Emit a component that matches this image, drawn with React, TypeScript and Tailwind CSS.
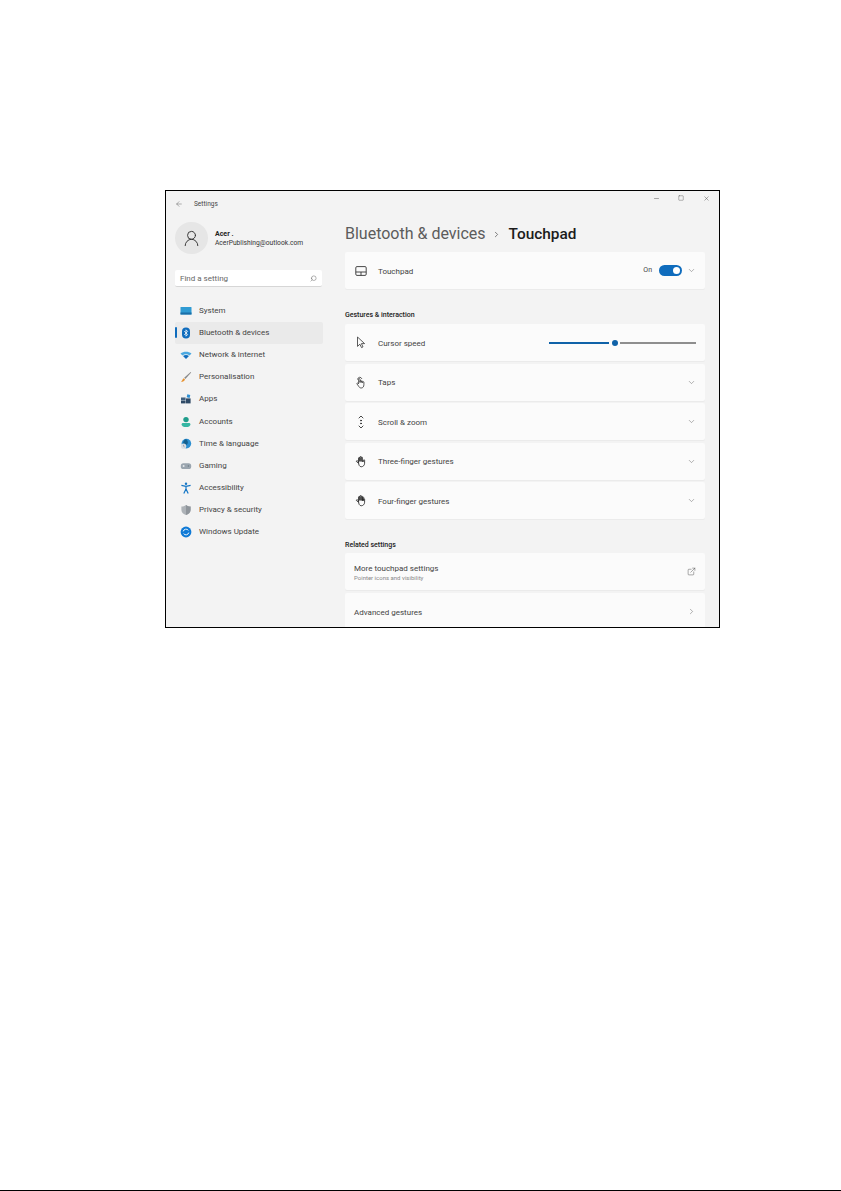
import type { ReactNode } from 'react'
import { ArrowLeft, ChevronDown, ChevronRight, ExternalLink, Minus, Search, Square, UserRound, X } from 'lucide-react'

function SystemIcon() {
  return (
    <svg width="12" height="12" viewBox="0 0 12 12">
      <rect x="0.5" y="2" width="11" height="7.5" rx="0.6" fill="#2f9bd3" />
      <rect x="0.5" y="7.5" width="11" height="2" fill="#1b6fa8" />
    </svg>
  )
}

function BluetoothIcon() {
  return (
    <svg width="12" height="12" viewBox="0 0 12 12">
      <rect x="2" y="0.5" width="8" height="11" rx="4" fill="#0f6cbd" />
      <path d="M4.3 4 7.6 7.6 6 9.2V2.8L7.6 4.4 4.3 8" fill="none" stroke="#fff" strokeWidth="0.8" />
    </svg>
  )
}

function WifiIcon() {
  return (
    <svg width="12" height="12" viewBox="0 0 12 12">
      <path d="M0.5 4.6C3.6 2 8.4 2 11.5 4.6L9.6 6.5C7.6 4.9 4.4 4.9 2.4 6.5Z" fill="#4aa8e0" />
      <path d="M3 7C4.8 5.6 7.2 5.6 9 7L6 10Z" fill="#0f6cbd" />
    </svg>
  )
}

function BrushIcon() {
  return (
    <svg width="12" height="12" viewBox="0 0 12 12">
      <path d="M10.6 1 11.2 1.6 5.4 8 4.2 6.8Z" fill="#8a8a8a" />
      <path d="M3.8 7.2 5 8.4C4.6 10 3 10.8 1 10.8 2 10 2.4 8.2 3.8 7.2Z" fill="#e8912d" />
    </svg>
  )
}

function AppsIcon() {
  return (
    <svg width="12" height="12" viewBox="0 0 12 12">
      <rect x="1" y="4.5" width="4.6" height="3" fill="#3f5f7f" />
      <rect x="1" y="7.8" width="4.6" height="2.6" fill="#2f4a66" />
      <rect x="6" y="5.4" width="4.6" height="5" fill="#2f4a66" />
      <rect x="7" y="1.6" width="3" height="3" fill="#2c8fd4" transform="rotate(12 8.5 3)" />
    </svg>
  )
}

function AccountIcon() {
  return (
    <svg width="12" height="12" viewBox="0 0 12 12">
      <circle cx="6" cy="3.6" r="2.7" fill="#1f9d8b" />
      <path d="M1.6 8.4C1.6 7.4 2.4 7 3.2 7H8.8C9.6 7 10.4 7.4 10.4 8.4 10.4 10 8.4 11 6 11S1.6 10 1.6 8.4Z" fill="#35b6a3" />
    </svg>
  )
}

function GlobeIcon() {
  return (
    <svg width="12" height="12" viewBox="0 0 12 12">
      <circle cx="6.4" cy="5.6" r="4.8" fill="#2b8fd1" />
      <path d="M6 1C8 2.4 8.6 5 7 6.6 5.6 7.4 4.6 6 3.4 6.4 2.6 5 3.6 2 6 1Z" fill="#14608f" />
      <circle cx="3.6" cy="8.2" r="2.6" fill="#d9dfe5" />
      <path d="M3.6 6.8V8.3L4.6 8.9" fill="none" stroke="#667" strokeWidth="0.5" />
    </svg>
  )
}

function GamingIcon() {
  return (
    <svg width="12" height="12" viewBox="0 0 12 12">
      <rect x="0.8" y="3.2" width="10.4" height="5.8" rx="2.6" fill="#9aa5af" />
      <circle cx="3.6" cy="6" r="1" fill="#e4e8eb" />
      <circle cx="8.4" cy="6" r="0.8" fill="#6d7a86" />
    </svg>
  )
}

function AccessibilityIcon() {
  return (
    <svg width="12" height="12" viewBox="0 0 12 12">
      <circle cx="6" cy="1.7" r="1.2" fill="#1476c6" />
      <path d="M1.4 3.4 6 4.4 10.6 3.4M6 4.4V7M6 7 3.8 11.4M6 7 8.2 11.4" fill="none" stroke="#1476c6" strokeWidth="1.2" />
    </svg>
  )
}

function ShieldIcon() {
  return (
    <svg width="12" height="12" viewBox="0 0 12 12">
      <path d="M6 1C7.6 2.2 9 2.5 10.6 2.6V6C10.6 8.6 8.4 10.4 6 11 3.6 10.4 1.4 8.6 1.4 6V2.6C3 2.5 4.4 2.2 6 1Z" fill="#adb2b7" />
      <path d="M6 1C7.6 2.2 9 2.5 10.6 2.6V6C10.6 8.6 8.4 10.4 6 11Z" fill="#8f959b" />
    </svg>
  )
}

function UpdateIcon() {
  return (
    <svg width="12" height="12" viewBox="0 0 12 12">
      <circle cx="6" cy="6" r="5.4" fill="#0f7ad6" />
      <path d="M3.2 5.4A2.9 2.9 0 0 1 8.4 4.4M8.8 6.6A2.9 2.9 0 0 1 3.6 7.6" fill="none" stroke="#fff" strokeWidth="0.9" />
    </svg>
  )
}

function TouchpadIcon() {
  return (
    <svg width="12" height="12" viewBox="0 0 12 12" fill="none" stroke="#333" strokeWidth="0.9">
      <rect x="0.8" y="1.6" width="10.4" height="8.8" rx="1.2" />
      <path d="M0.8 7H11.2M6 7V10.4" />
    </svg>
  )
}

function CursorIcon() {
  return (
    <svg width="12" height="13" viewBox="0 0 12 13" fill="none" stroke="#333" strokeWidth="0.8" strokeLinejoin="round">
      <path d="M2.5 1V10.4L4.9 8.2 6.5 11.6 8 10.9 6.4 7.6H9.6Z" />
    </svg>
  )
}

function TapIcon() {
  return (
    <svg width="12" height="13" viewBox="0 0 12 13" fill="none" stroke="#333" strokeWidth="0.8" strokeLinecap="round" strokeLinejoin="round">
      <path d="M2.6 3.2A2.2 2.2 0 0 1 6.8 2.6" />
      <path d="M3.6 7.4V3.2C3.6 2.4 5 2.4 5 3.2V6.2" />
      <path d="M5 6V5C5 4.3 6.3 4.3 6.3 5V6.2M6.3 6V5.4C6.3 4.7 7.6 4.7 7.6 5.4V6.4M7.6 6.2C7.6 5.5 8.9 5.5 8.9 6.2V8.6C8.9 10.8 7.8 12 6.2 12 4.8 12 4.2 11.2 3.6 10.2L2 8C1.6 7.2 2.6 6.6 3.2 7.2L3.6 7.6" />
    </svg>
  )
}

function HandIcon({ fingers }: { fingers: number }) {
  return (
    <svg width="13" height="13" viewBox="0 0 13 13" fill="none" stroke="#222" strokeWidth="0.9" strokeLinecap="round" strokeLinejoin="round">
      <path d="M3.4 8 1.8 6.8C1 6.2 1.8 5.2 2.6 5.8L3.8 6.8" />
      <path d="M3.8 7V2.8C3.8 2 5.2 2 5.2 2.8V6" />
      <path d="M5.2 6V1.8C5.2 1 6.6 1 6.6 1.8V6" />
      <path d="M6.6 6V2.2C6.6 1.4 8 1.4 8 2.2V6" />
      {fingers > 3 && <path d="M8 6V3.2C8 2.5 9.4 2.5 9.4 3.2V6" />}
      <path d="M3.8 7.4C3.8 10.4 5 12.2 6.8 12.2S10.4 10.8 10.4 8.4V5.2C10.4 4.4 9.2 4.4 9.2 5.2V6.4" />
      <path d="M8 6V6.6" />
    </svg>
  )
}

function ScrollIcon() {
  return (
    <svg width="12" height="14" viewBox="0 0 12 14" fill="none" stroke="#333" strokeWidth="0.9" strokeLinecap="round" strokeLinejoin="round">
      <path d="M4 3 6 1 8 3M4 11 6 13 8 11" />
      <circle cx="6" cy="5.6" r="0.5" fill="#333" />
      <circle cx="6" cy="8.4" r="0.5" fill="#333" />
    </svg>
  )
}

const navItems = [
  { label: 'System', icon: <SystemIcon /> },
  { label: 'Bluetooth & devices', icon: <BluetoothIcon />, active: true },
  { label: 'Network & internet', icon: <WifiIcon /> },
  { label: 'Personalisation', icon: <BrushIcon /> },
  { label: 'Apps', icon: <AppsIcon /> },
  { label: 'Accounts', icon: <AccountIcon /> },
  { label: 'Time & language', icon: <GlobeIcon /> },
  { label: 'Gaming', icon: <GamingIcon /> },
  { label: 'Accessibility', icon: <AccessibilityIcon /> },
  { label: 'Privacy & security', icon: <ShieldIcon /> },
  { label: 'Windows Update', icon: <UpdateIcon /> },
]

function Card({ icon, label, sub, children }: { icon?: ReactNode; label: string; sub?: string; children?: ReactNode }) {
  return (
    <div className="flex h-[37px] shrink-0 items-center rounded-[2px] bg-[#fbfbfb] shadow-[0_1px_0_#ebebeb]">
      {icon && <div className="ml-[10px] flex w-[12px] justify-center">{icon}</div>}
      <div className={icon ? 'ml-[11px] flex-1 pt-[2px]' : 'ml-[9px] flex-1 pt-[2px]'}>
        <div className="text-[8px] leading-[10px] text-[#444]">{label}</div>
        {sub && <div className="text-[6px] leading-[7px] text-[#888]">{sub}</div>}
      </div>
      {children}
    </div>
  )
}

function Chevron() {
  return <ChevronDown className="mr-[9px] h-[9px] w-[9px] text-[#777]" strokeWidth={1.5} />
}

export default function App() {
  return (
    <div className="relative h-[1191px] bg-white pl-[165px] pt-[190px] font-['Roboto',sans-serif]">
      <div className="flex h-[438px] w-[555px] flex-col overflow-hidden border border-black bg-[#f3f3f3]">
        {/* Title bar */}
        <div className="flex h-[27px] shrink-0 items-start">
          <ArrowLeft className="ml-[9px] mt-[9px] h-[8px] w-[8px] text-[#666]" strokeWidth={1.5} />
          <span className="ml-[11px] mt-[8px] flex-1 text-[6.5px] leading-[10px] text-[#444]">Settings</span>
          <Minus className="mt-[4px] h-[7px] w-[7px] text-[#444]" strokeWidth={1.5} />
          <Square className="ml-[18px] mt-[4px] h-[6px] w-[6px] text-[#444]" strokeWidth={1.5} />
          <X className="ml-[19px] mr-[9px] mt-[4px] h-[7px] w-[7px] text-[#444]" strokeWidth={1.5} />
        </div>

        <div className="flex min-h-0 flex-1">
          {/* Sidebar */}
          <div className="w-[179px] shrink-0 pl-[9px]">
            <div className="mt-[4px] flex items-center">
              <div className="flex h-[32px] w-[33px] items-center justify-center rounded-full bg-[#e6e6e6]">
                <UserRound className="h-[19px] w-[19px] text-[#333]" strokeWidth={1.2} />
              </div>
              <div className="ml-[7px]">
                <div className="text-[7px] font-bold leading-[9px] text-[#222]">Acer .</div>
                <div className="text-[6.7px] leading-[8px] text-[#333]">AcerPublishing@outlook.com</div>
              </div>
            </div>
            <div className="mt-[16px] flex h-[17px] w-[147px] items-center justify-between rounded-[2px] border-b border-[#d6d6d6] bg-white pl-[5px] pr-[5px] pt-[1px] text-[8px] text-[#666]">
              <span>Find a setting</span>
              <Search className="h-[7px] w-[7px] -scale-x-100 text-[#555]" strokeWidth={1.5} />
            </div>
            <div className="mt-[13px] w-[148px]">
              {navItems.map((item) => (
                <div
                  key={item.label}
                  className={
                    item.active
                      ? 'relative flex h-[22.1px] items-center rounded-[2px] bg-[#eaeaea] pl-[5px]'
                      : 'flex h-[22.1px] items-center pl-[5px]'
                  }
                >
                  {item.active && <div className="absolute left-0 top-[5px] h-[11px] w-[2px] rounded-full bg-[#0f6cbd]" />}
                  {item.icon}
                  <span className="ml-[7px] text-[8px] leading-[10px] text-[#444]">{item.label}</span>
                </div>
              ))}
            </div>
          </div>

          {/* Content */}
          <div className="w-[360px] shrink-0">
            <div className="mt-[6px] flex h-[20px] items-center text-[16px] leading-[20px]">
              <span className="text-[#5c5c5c]">Bluetooth &amp; devices</span>
              <ChevronRight className="ml-[6px] mr-[8px] h-[9px] w-[9px] text-[#555]" strokeWidth={2} />
              <span className="text-[15.4px] font-medium text-[#1b1b1b]">Touchpad</span>
            </div>

            <div className="mt-[8px] flex flex-col">
              <Card icon={<TouchpadIcon />} label="Touchpad">
                <span className="text-[7px] text-[#444]">On</span>
                <div className="ml-[7px] mr-[5px] flex h-[11px] w-[23px] items-center justify-end rounded-full bg-[#0f6cbd] pr-[2px]">
                  <div className="h-[7px] w-[7px] rounded-full bg-white" />
                </div>
                <Chevron />
              </Card>

              <div className="pb-[3px] pt-[20px] text-[7px] font-medium leading-[12px] text-[#222]">Gestures &amp; interaction</div>
              <div className="flex flex-col gap-[2.5px]">
                <Card icon={<CursorIcon />} label="Cursor speed">
                  <div className="mr-[9px] flex w-[147px] items-center">
                    <div className="h-[2px] w-[60px] bg-[#0f62a8]" />
                    <div className="ml-[3px] h-[6px] w-[6px] rounded-full bg-[#0f62a8]" />
                    <div className="ml-[2px] h-[2px] flex-1 bg-[#8e8e8e]" />
                  </div>
                </Card>
                <Card icon={<TapIcon />} label="Taps"><Chevron /></Card>
                <Card icon={<ScrollIcon />} label="Scroll & zoom"><Chevron /></Card>
                <Card icon={<HandIcon fingers={3} />} label="Three-finger gestures"><Chevron /></Card>
                <Card icon={<HandIcon fingers={4} />} label="Four-finger gestures"><Chevron /></Card>
              </div>

              <div className="pb-[2px] pt-[20px] text-[7px] font-medium leading-[12px] text-[#222]">Related settings</div>
              <div className="flex flex-col gap-[3px]">
                <Card label="More touchpad settings" sub="Pointer icons and visibility">
                  <ExternalLink className="mr-[9px] h-[9px] w-[9px] text-[#444]" strokeWidth={1.2} />
                </Card>
                <Card label="Advanced gestures">
                  <ChevronRight className="mr-[9px] h-[9px] w-[9px] text-[#555]" strokeWidth={1.2} />
                </Card>
              </div>
            </div>
          </div>
        </div>
      </div>
      <div className="absolute bottom-0 left-0 h-[1px] w-full bg-black" />
    </div>
  )
}
